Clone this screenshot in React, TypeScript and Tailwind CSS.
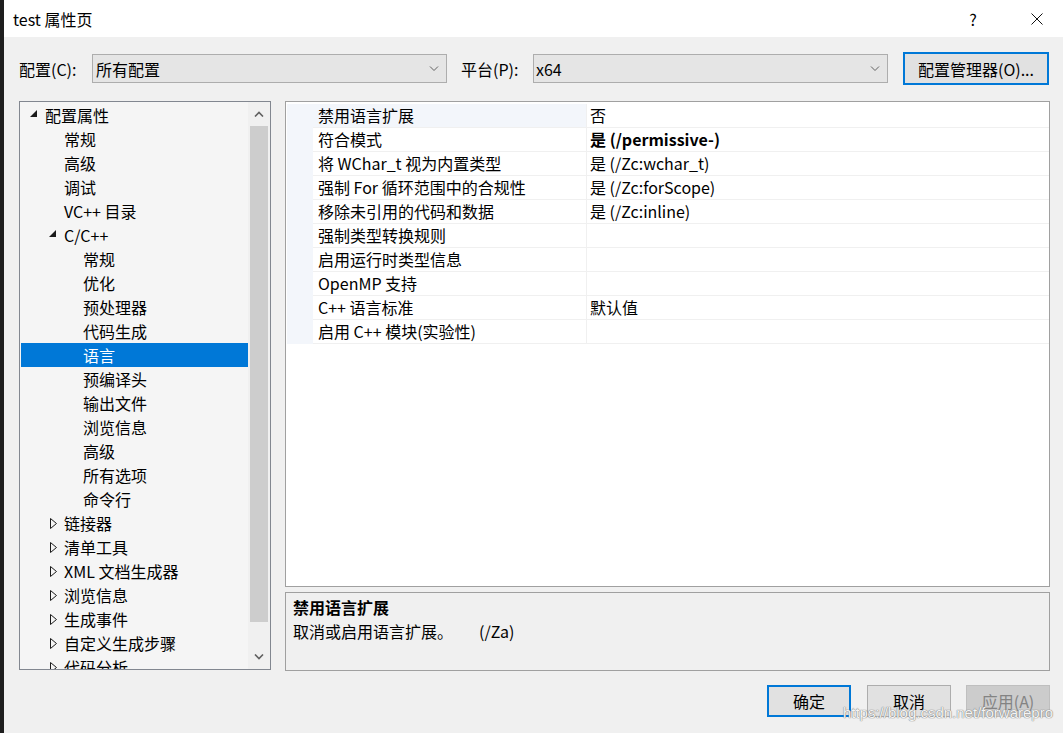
import React from 'react'

type TreeItem = {
    label: string
    level: 0 | 1 | 2
    state?: 'open' | 'closed'
    selected?: boolean
}

const TREE: TreeItem[] = [
    { label: '配置属性', level: 0, state: 'open' },
    { label: '常规', level: 1 },
    { label: '高级', level: 1 },
    { label: '调试', level: 1 },
    { label: 'VC++ 目录', level: 1 },
    { label: 'C/C++', level: 1, state: 'open' },
    { label: '常规', level: 2 },
    { label: '优化', level: 2 },
    { label: '预处理器', level: 2 },
    { label: '代码生成', level: 2 },
    { label: '语言', level: 2, selected: true },
    { label: '预编译头', level: 2 },
    { label: '输出文件', level: 2 },
    { label: '浏览信息', level: 2 },
    { label: '高级', level: 2 },
    { label: '所有选项', level: 2 },
    { label: '命令行', level: 2 },
    { label: '链接器', level: 1, state: 'closed' },
    { label: '清单工具', level: 1, state: 'closed' },
    { label: 'XML 文档生成器', level: 1, state: 'closed' },
    { label: '浏览信息', level: 1, state: 'closed' },
    { label: '生成事件', level: 1, state: 'closed' },
    { label: '自定义生成步骤', level: 1, state: 'closed' },
    { label: '代码分析', level: 1, state: 'closed' },
]

const PROPS: { name: string; value: string; bold?: boolean }[] = [
    { name: '禁用语言扩展', value: '否' },
    { name: '符合模式', value: '是 (/permissive-)', bold: true },
    { name: '将 WChar_t 视为内置类型', value: '是 (/Zc:wchar_t)' },
    { name: '强制 For 循环范围中的合规性', value: '是 (/Zc:forScope)' },
    { name: '移除未引用的代码和数据', value: '是 (/Zc:inline)' },
    { name: '强制类型转换规则', value: '' },
    { name: '启用运行时类型信息', value: '' },
    { name: 'OpenMP 支持', value: '' },
    { name: 'C++ 语言标准', value: '默认值' },
    { name: '启用 C++ 模块(实验性)', value: '' },
]

const INDENT = ['pl-[9px]', 'pl-[28px]', 'pl-[47px]']

function Chevron({ up = false }: { up?: boolean }) {
    return (
        <svg width="10" height="6" viewBox="0 0 10 6">
            <path
                d={up ? 'M1 5.5 L5 1.5 L9 5.5' : 'M1 0.5 L5 4.5 L9 0.5'}
                stroke="#606060"
                strokeWidth={up ? 1.6 : 1}
                fill="none"
            />
        </svg>
    )
}

function Combo({ value, pad }: { value: string; pad: string }) {
    return (
        <div
            className={`w-[355px] h-[29px] border border-[#adadad] bg-[#e5e5e5] flex items-center justify-between ${pad} pr-[7px]`}
        >
            <span>{value}</span>
            <Chevron />
        </div>
    )
}

function TreeRow({ item }: { item: TreeItem }) {
    return (
        <div
            className={`h-[24px] leading-[24px] flex items-center whitespace-nowrap ${INDENT[item.level]} ${
                item.selected ? 'bg-[#0078d7] text-white' : ''
            }`}
        >
            <div className="w-[15px] h-[24px] flex items-center shrink-0">
                {item.state === 'open' && (
                    <svg width="8" height="8" viewBox="0 0 8 8" className="mt-[-3px]">
                        <polygon points="7,0 7,7 0,7" fill="#1a1a1a" />
                    </svg>
                )}
                {item.state === 'closed' && (
                    <svg width="8" height="11" viewBox="0 0 8 11" className="ml-[1px]">
                        <polygon points="0.5,0.5 6.5,5.5 0.5,10.5" fill="none" stroke="#1a1a1a" strokeWidth="1" />
                    </svg>
                )}
            </div>
            <span>{item.label}</span>
        </div>
    )
}

function DialogButton({
    label,
    variant,
    className = '',
}: {
    label: string
    variant: 'default' | 'normal' | 'disabled'
    className?: string
}) {
    const style =
        variant === 'default'
            ? 'border-2 border-[#0078d7] bg-[#e1e1e1] text-black'
            : variant === 'normal'
              ? 'border border-[#adadad] bg-[#e1e1e1] text-black'
              : 'border border-[#bfbfbf] bg-[#cccccc] text-[#838383]'
    return (
        <div className={`w-[84px] h-[32px] flex items-center justify-center ${style} ${className}`}>
            {label}
        </div>
    )
}

export default function App() {
    return (
        <div className="w-[1063px] h-[733px] flex overflow-hidden text-[16px] text-black font-['Noto_Sans_CJK_SC','Noto_Sans',sans-serif]">
            {/* desktop behind the dialog */}
            <div className="w-[4px] bg-[#1e1e1e]" />

            <div className="flex-1 flex flex-col relative">
                {/* title bar */}
                <div className="h-[37px] bg-white flex items-center">
                    <span className="pl-[9px] flex-1">test 属性页</span>
                    <div className="w-[46px] mr-[18px] flex justify-center text-[16px]">?</div>
                    <div className="w-[46px] mr-[3px] flex justify-center">
                        <svg width="12" height="12" viewBox="0 0 12 12">
                            <path d="M0.5 0.5 L11.5 11.5 M11.5 0.5 L0.5 11.5" stroke="#111" strokeWidth="1" />
                        </svg>
                    </div>
                </div>

                <div className="flex-1 bg-[#f0f0f0] pl-[15px] pr-[13px]">
                    {/* configuration row */}
                    <div className="mt-[15px] h-[33px] flex items-center">
                        <span className="w-[73px]">配置(C):</span>
                        <Combo value="所有配置" pad="pl-[3px]" />
                        <span className="ml-[14px] w-[72px]">平台(P):</span>
                        <Combo value="x64" pad="pl-[2px]" />
                        <div className="ml-[15px] w-[146px] h-[33px] border-2 border-[#0078d7] bg-[#e1e1e1] flex items-center justify-center">
                            配置管理器(O)...
                        </div>
                    </div>

                    {/* main area */}
                    <div className="mt-[16px] h-[570px] flex gap-[14px]">
                        {/* category tree */}
                        <div className="w-[252px] h-[569px] border border-[#828790] bg-[#f5f5f5] flex">
                            <div className="flex-1 pl-[1px] pt-[1px] overflow-hidden">
                                {TREE.map((item, i) => (
                                    <TreeRow key={i} item={item} />
                                ))}
                            </div>
                            <div className="w-[22px] bg-[#f0f0f0] flex flex-col">
                                <div className="h-[24px] flex items-center justify-center">
                                    <Chevron up />
                                </div>
                                <div className="h-[496px] mx-[2px] bg-[#cdcdcd]" />
                                <div className="flex-1" />
                                <div className="h-[24px] flex items-center justify-center">
                                    <svg width="10" height="6" viewBox="0 0 10 6">
                                        <path d="M1 0.5 L5 4.5 L9 0.5" stroke="#606060" strokeWidth="1.6" fill="none" />
                                    </svg>
                                </div>
                            </div>
                        </div>

                        <div className="flex-1 flex flex-col gap-[5px]">
                            {/* property grid */}
                            <div className="flex-1 border border-[#a0a0a0] bg-white pt-[2px] pl-[1px]">
                                {PROPS.map((p, i) => (
                                    <div key={i} className="h-[24px] flex leading-[23px]">
                                        <div className="w-[26px] bg-[#f3f6fb]" />
                                        <div
                                            className={`w-[274px] pl-[5px] whitespace-nowrap border-b border-r border-[#f0f0f0] ${
                                                i === 0 ? 'bg-[#f3f6fb]' : ''
                                            }`}
                                        >
                                            {p.name}
                                        </div>
                                        <div
                                            className={`flex-1 pl-[3px] whitespace-nowrap border-b border-[#f0f0f0] ${
                                                p.bold ? 'font-bold' : ''
                                            }`}
                                        >
                                            {p.value}
                                        </div>
                                    </div>
                                ))}
                            </div>

                            {/* description pane */}
                            <div className="h-[79px] border border-[#a0a0a0] bg-[#f0f0f0] pl-[7px] pt-[2px]">
                                <div className="h-[24px] leading-[24px] font-bold">禁用语言扩展</div>
                                <div className="h-[24px] leading-[24px]">
                                    取消或启用语言扩展。<span className="ml-[26px]">(/Za)</span>
                                </div>
                            </div>
                        </div>
                    </div>

                    {/* dialog buttons */}
                    <div className="mt-[14px] flex justify-end gap-[15px]">
                        <DialogButton label="确定" variant="default" className="mr-[1px]" />
                        <DialogButton label="取消" variant="normal" />
                        <DialogButton label="应用(A)" variant="disabled" />
                    </div>
                </div>

                {/* watermark */}
                <div className="absolute right-[10px] bottom-[9px] text-[15px] text-[#f4f4f4] font-['Liberation_Sans',sans-serif] [text-shadow:0_0_1px_#777,0_0_1px_#777]">
                    https://blog.csdn.net/forwarepro
                </div>
            </div>
        </div>
    )
}
